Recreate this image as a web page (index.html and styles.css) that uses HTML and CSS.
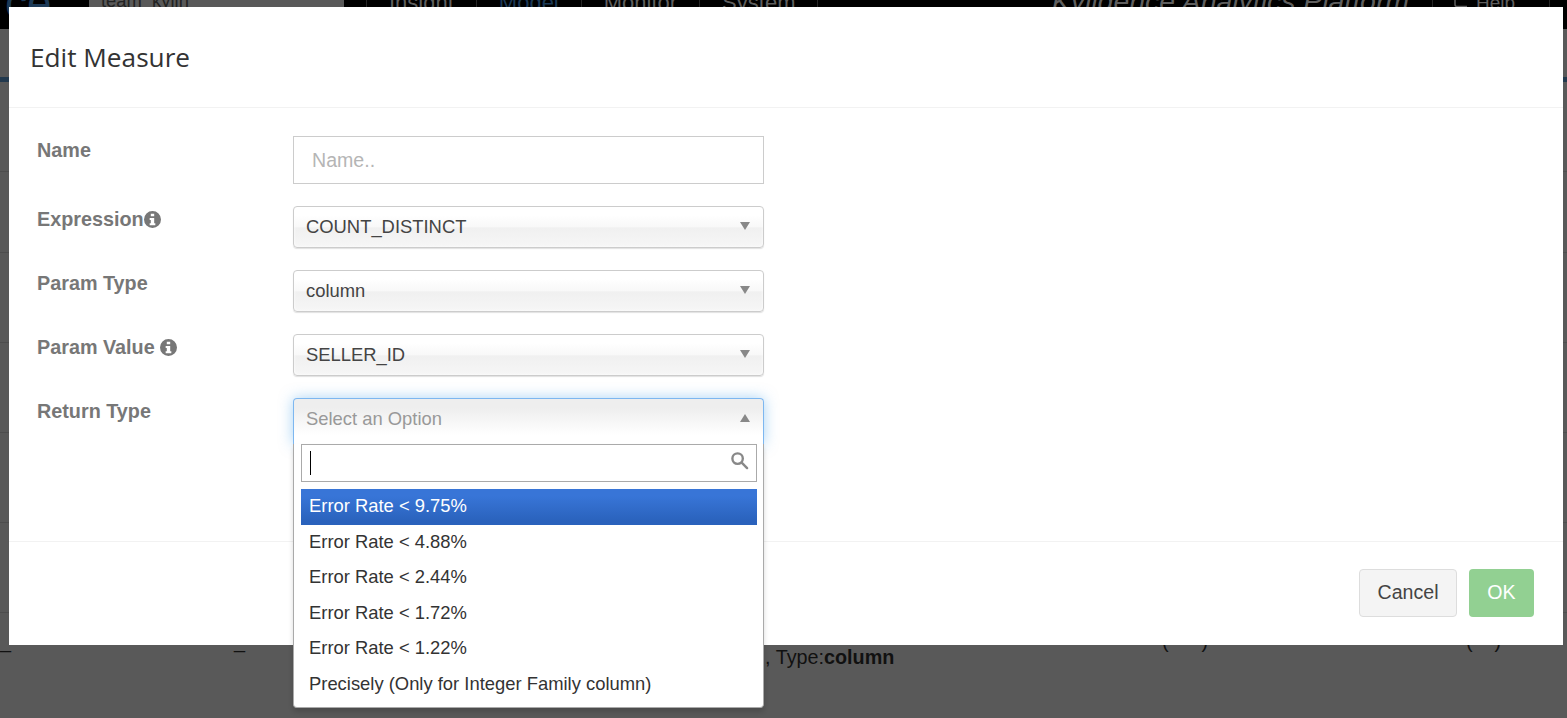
FILE: index.html
```html
<!DOCTYPE html>
<html lang="en">
<head>
  <meta charset="UTF-8">
  <title>Edit Measure</title>
  <link rel="stylesheet" href="styles.css">
</head>
<body>
  <div class="page">
    <div class="topbar">
      <span class="brand">ce</span>
      <span class="project">team_kylin</span>
      <span class="nav-item nav-first">Insight</span>
      <span class="nav-item nav-active">Model</span>
      <span class="nav-item">Monitor</span>
      <span class="nav-item">System</span>
      <span class="platform">Kyligence Analytics Platform</span>
      <span class="nav-help"><svg class="help-icon" viewBox="0 0 14 8"><path d="M1 0v4.500Q1 6.500 3 6.500H13"/></svg>Help</span>
    </div>
    <div class="bg-rows">
      <div class="bg-row bg-row-blue"></div>
      <div class="bg-row"></div>
      <div class="bg-row bg-row-short"></div>
      <div class="bg-row"></div>
      <div class="bg-row"></div>
      <div class="bg-row"></div>
      <div class="bg-row"></div>
    </div>
    <div class="bg-table">
      <span class="bg-cell bg-dash-a">_</span>
      <span class="bg-cell bg-dash-b">_</span>
      <span class="bg-cell bg-type">, Type:<b>column</b></span>
      <span class="bg-cell bg-paren-a">(&nbsp;&nbsp;&nbsp;&nbsp;&nbsp;&nbsp;)</span>
      <span class="bg-cell bg-paren-b">(&nbsp;&nbsp;&nbsp;&nbsp;)</span>
    </div>
  </div>

  <div class="modal">
    <div class="modal-header">
      <h4>Edit Measure</h4>
    </div>

    <div class="modal-body">
      <div class="form-row form-row-name">
        <label>Name</label>
        <input type="text" class="text-input" placeholder="Name..">
      </div>
      <div class="form-row">
        <label>Expression<svg class="info-icon" viewBox="0 0 24 24"><path fill-rule="evenodd" d="M12 0a12 12 0 1 0 0 24a12 12 0 0 0 0-24zM9.600 3.800h4.800v3.600H9.600zM8 10h6.400v7.200H16V20H8v-2.800h1.600v-4.400H8z"/></svg></label>
        <div class="select"><span>COUNT_DISTINCT</span><i class="arrow-down"></i></div>
      </div>
      <div class="form-row">
        <label>Param Type</label>
        <div class="select"><span>column</span><i class="arrow-down"></i></div>
      </div>
      <div class="form-row">
        <label>Param Value <svg class="info-icon" viewBox="0 0 24 24"><path fill-rule="evenodd" d="M12 0a12 12 0 1 0 0 24a12 12 0 0 0 0-24zM9.600 3.800h4.800v3.600H9.600zM8 10h6.400v7.200H16V20H8v-2.800h1.600v-4.400H8z"/></svg></label>
        <div class="select"><span>SELLER_ID</span><i class="arrow-down"></i></div>
      </div>
      <div class="form-row">
        <label>Return Type</label>
        <div class="select-open">
          <div class="select select-head"><span>Select an Option</span><i class="arrow-up"></i></div>
          <div class="dropdown">
            <div class="search-box">
              <i class="caret"></i>
              <svg class="search-icon" viewBox="0 0 20 20"><circle cx="8" cy="8" r="5.500"/><path d="M12.300 12.300L18 18"/></svg>
            </div>
            <ul class="options">
              <li class="highlighted">Error Rate &lt; 9.75%</li>
              <li>Error Rate &lt; 4.88%</li>
              <li>Error Rate &lt; 2.44%</li>
              <li>Error Rate &lt; 1.72%</li>
              <li>Error Rate &lt; 1.22%</li>
              <li>Precisely (Only for Integer Family column)</li>
            </ul>
          </div>
        </div>
      </div>
    </div>

    <div class="modal-footer">
      <button class="btn btn-cancel">Cancel</button>
      <button class="btn btn-ok">OK</button>
    </div>
  </div>
</body>
</html>
```

FILE: styles.css
```css
:root {
  --backdrop-color: #595959;
  --label-color: #777;
  --text-color: #444;
  --border-color: #aaa;
}

html,
body {
  margin: 0;
  padding: 0;
  height: 100%;
  overflow: hidden;
}

body {
  position: relative;
  background-color: var(--backdrop-color);
  font-family: "Liberation Sans", Arial, sans-serif;
  font-size: 18.4px;
  color: var(--text-color);
}

/* page behind the modal, only the edges show */
.page {
  height: 718px;
  display: flex;
  flex-direction: column;
}

.topbar {
  height: 29px;
  flex: none;
  display: flex;
  overflow: hidden;
  background-color: #000;
  color: #5f5f5f;
  font-size: 22px;
}

.topbar span {
  height: 29px;
  line-height: 6px;
  margin-top: 0;
  white-space: nowrap;
}

.topbar .brand {
  width: 89px;
  box-sizing: border-box;
  padding-left: 5px;
  color: #1c3a57;
  font-size: 44px;
  line-height: 6px;
}

.topbar .project {
  width: 255px;
  margin-right: 22px;
  padding-left: 12px;
  box-sizing: border-box;
  background-color: #595959;
  color: #222;
  font-size: 18.4px;
  line-height: 2px;
}

.nav-item {
  padding: 0 22px;
  border-right: 1px solid #262626;
}

.nav-first {
  border-left: 1px solid #262626;
}

.nav-active {
  color: #1c3a57;
}

.topbar .platform {
  margin-left: auto;
  padding-right: 23px;
  border-right: 1px solid #262626;
  font-size: 28.4px;
  font-style: italic;
  line-height: 2px;
}

.nav-help {
  width: 117px;
  box-sizing: border-box;
  padding-left: 21px;
  border-right: 1px solid #262626;
  margin-right: 17px;
  font-size: 19px;
}

.help-icon {
  width: 14px;
  height: 8px;
  margin-right: 8px;
  vertical-align: 1px;
  fill: none;
  stroke: #5f5f5f;
  stroke-width: 1.500;
}

.bg-rows {
  height: 616px;
  flex: none;
  overflow: hidden;
}

.bg-row {
  height: 89px;
  border-bottom: 1px solid #4e4e4e;
}

.bg-row-short {
  height: 80px;
}

.bg-row-blue {
  height: 48px;
  border-bottom: 5px solid #22394e;
}

.bg-table {
  display: flex;
  height: 30px;
  color: #111;
  font-size: 19.8px;
}

.bg-cell {
  line-height: 22px;
  white-space: nowrap;
}

.bg-dash-a {
  width: 234px;
  margin-top: -15px;
}

.bg-dash-b {
  width: 531px;
  margin-top: -15px;
}

.bg-type {
  width: 397px;
  padding-top: 1px;
}

.bg-paren-a {
  width: 304px;
  margin-top: -15px;
}

.bg-paren-b {
  margin-top: -15px;
}

/* modal */
.modal {
  position: absolute;
  top: 7px;
  left: 9px;
  width: 1554px;
  height: 638px;
  display: flex;
  flex-direction: column;
  background-color: #fff;
}

.modal-header {
  height: 101px;
  flex: none;
  box-sizing: border-box;
  padding: 0 21px;
  border-bottom: 1px solid #f2f2f2;
}

.modal-header h4 {
  margin: 0;
  line-height: 100px;
  font-family: "Open Sans", sans-serif;
  font-size: 26.2px;
  font-weight: 400;
  color: #333;
}

.modal-body {
  flex: 1;
  box-sizing: border-box;
  padding: 28px 28px 0;
}

.form-row {
  display: flex;
  margin-bottom: 22px;
}

.form-row label {
  width: 256px;
  flex: none;
  padding-top: 2px;
  font-size: 19.8px;
  font-weight: 700;
  line-height: 22px;
  color: var(--label-color);
}

.form-row-name label {
  padding-top: 3px;
}

.info-icon {
  width: 17px;
  height: 17px;
  vertical-align: -2px;
  fill: var(--label-color);
}

.text-input {
  width: 471px;
  height: 48px;
  box-sizing: border-box;
  padding: 0 18px;
  border: 1px solid #ccc;
  font-family: inherit;
  font-size: 19.6px;
  color: var(--text-color);
}

.text-input::placeholder {
  color: #b5b5b5;
  opacity: 1;
}

.select {
  width: 471px;
  height: 42px;
  box-sizing: border-box;
  display: flex;
  align-items: center;
  justify-content: space-between;
  padding: 0 13px 0 12px;
  border: 1px solid #ccc;
  border-radius: 4px;
  background: linear-gradient(#fff 20%, #f8f8f8 50%, #f0f0f0 52%, #f6f6f6 100%);
  box-shadow: 0 0 3px #fff inset, 0 1px 1px rgba(0, 0, 0, 0.12);
}

.arrow-down,
.arrow-up {
  width: 0;
  height: 0;
  margin-bottom: 2px;
  border-left: 5.5px solid transparent;
  border-right: 5.5px solid transparent;
}

.arrow-down {
  border-top: 8px solid #888;
}

.arrow-up {
  border-bottom: 8px solid #888;
}

/* open state of the return type select */
.select-open {
  position: relative;
  width: 471px;
  height: 42px;
}

.select-head {
  position: relative;
  height: 46px;
  padding-bottom: 6px;
  border-color: #7db7f0;
  border-bottom: none;
  border-radius: 4px 4px 0 0;
  background: linear-gradient(#eee 20%, #fff 80%);
  color: #999;
  box-shadow: 0 0 14px rgba(82, 168, 236, 0.5);
}

.dropdown {
  position: absolute;
  top: 46px;
  left: 0;
  width: 471px;
  height: 264px;
  box-sizing: border-box;
  padding: 0 6px 0 7px;
  border: 1px solid var(--border-color);
  border-top: none;
  border-radius: 0 0 4px 4px;
  background-color: #fff;
  box-shadow: 0 4px 5px rgba(0, 0, 0, 0.15);
}

.search-box {
  height: 38px;
  box-sizing: border-box;
  display: flex;
  align-items: center;
  justify-content: space-between;
  padding: 0 7px 0 8px;
  border: 1px solid var(--border-color);
}

.caret {
  width: 1px;
  height: 24px;
  background-color: #000;
}

.search-icon {
  width: 19px;
  height: 19px;
  margin-bottom: 6px;
  fill: none;
  stroke: #888;
  stroke-width: 2.5;
  stroke-linecap: round;
}

.options {
  list-style: none;
  margin: 7px 0 0;
  padding: 0;
}

.options li {
  height: 35.5px;
  box-sizing: border-box;
  padding-left: 8px;
  line-height: 34px;
  color: #333;
}

.options .highlighted {
  background: linear-gradient(#3875d7 20%, #2a62bc 90%);
  color: #fff;
}

.modal-footer {
  height: 104px;
  flex: none;
  box-sizing: border-box;
  display: flex;
  align-items: flex-start;
  justify-content: flex-end;
  gap: 12px;
  padding: 27px 29px 0 0;
  border-top: 1px solid #f2f2f2;
}

.btn {
  height: 48px;
  box-sizing: border-box;
  padding-bottom: 3px;
  border: 1px solid transparent;
  border-radius: 4px;
  font-family: "Liberation Sans", Arial, sans-serif;
  font-size: 19.6px;
}

.btn-cancel {
  width: 98px;
  background-color: #f4f4f4;
  border-color: #ddd;
  color: #444;
}

.btn-ok {
  width: 65px;
  background-color: #92d092;
  color: #fff;
}
```
